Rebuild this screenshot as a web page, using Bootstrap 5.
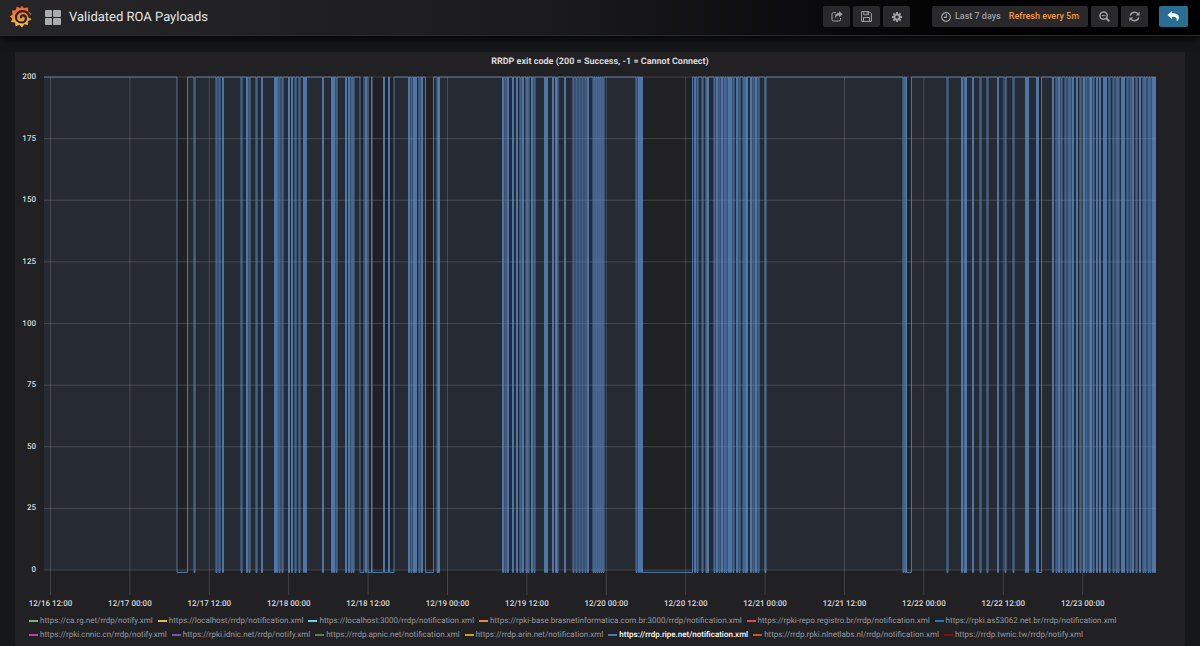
<!DOCTYPE html>
<html lang="en">
<head>
<meta charset="utf-8">
<meta name="viewport" content="width=device-width, initial-scale=1">
<title>Validated ROA Payloads</title>
<link href="https://cdn.jsdelivr.net/npm/bootstrap@5.3.0/dist/css/bootstrap.min.css" rel="stylesheet">
<style>
body { background: #161719; color: #d8d9da; font-family: Roboto, "Liberation Sans", sans-serif; font-size: 8px; line-height: 14px; text-rendering: geometricPrecision; }
.topbar { height: 36px; background: linear-gradient(90deg, #262628 0%, #1b1b1d 45%, #020203 80%, #000 100%); border-bottom: 1px solid #2a2a2d; box-shadow: 0 2px 12px #000; padding: 0 12px 2px 9px; }
.home { margin-right: 12px; }
.dash-title { font-size: 13px; line-height: 20px; color: #e3e4e6; gap: 8px; padding-top: 2px; }
.tool { --bs-btn-color: #9fa0a3; --bs-btn-bg: #29292b; --bs-btn-hover-bg: #36363a; --bs-btn-hover-color: #fff; --bs-btn-border-radius: 2px; --bs-btn-border-width: 0; --bs-btn-padding-x: 0; --bs-btn-padding-y: 0; width: 27px; height: 21px; background-color: var(--bs-btn-bg); }
.tool-time { width: 156px; font-size: 9px; line-height: 23px; font-weight: 500; white-space: nowrap; }
.tool-back { --bs-btn-color: #fff; --bs-btn-bg: #2a6e93; --bs-btn-hover-bg: #34809f; width: 29px; }
.tool-groups { gap: 22px; }
.tools { gap: 3px; }
.tool-back { margin-left: 11px; }
.accent { color: #f0993e; }
.board { padding: 16px 15px 0; }
.graph-panel { background: #212124; }
.panel-title { font-size: 9px; line-height: 18px; font-weight: 700; color: #d8d9db; padding-top: 1px; }
.chart { padding: 6px 29px 0 0; min-height: 200px; }
.y-axis { width: 29px; padding: 0 8px 25px 0; font-weight: 500; }
.y-axis span { height: 0; line-height: 0; }
.plot { flex: 1 1 0; min-height: 0; overflow: visible; }
.x-axis { height: 40px; overflow: visible; margin-bottom: -15px; }
.grid-line { stroke: #c8c8c8; stroke-opacity: .2; stroke-width: 1; vector-effect: non-scaling-stroke; }
.area { fill: #5a82b4; fill-opacity: .1; }
.series { fill: none; stroke: #5b8fce; stroke-opacity: .76; stroke-width: 1; vector-effect: non-scaling-stroke; }
.tick-text { fill: #d8d9da; font-size: 8px; font-weight: 500; text-anchor: middle; }
.legend-list { padding: 19px 14px 4px; column-gap: 5px; margin: 0; }
.legend-list a { color: #97989b; text-decoration: none; gap: 2px; white-space: nowrap; }
.legend-list a.selected { color: #fff; font-weight: 500; }
.swatch { width: 9px; height: 2px; }
</style>
</head>
<body class="min-vh-100 d-flex flex-column">
<header class="topbar d-flex align-items-center">
  <a href="#" aria-label="Home" class="home d-flex">
    <svg width="24" height="24" viewBox="0 0 24 24">
      <defs><linearGradient id="flame" x1="0" y1="0" x2="0" y2="1"><stop offset="0" stop-color="#ee5a34"/><stop offset=".5" stop-color="#f08a35"/><stop offset="1" stop-color="#fbd034"/></linearGradient></defs>
      <path fill="url(#flame)" d="M12.800 .8 14.800 3l4.200-.6.200 4 3 2.400-1.800 2.600 2 3.400-3.400 1.200-.2 4-3.600-.8-2.200 3.200-2.600-2.600-3.800 1.400-.6-3.600-4-.6 1.400-3.200-2.600-2.600 2.800-1.800-.6-4 3.600-.2 1.200-3.600 3.200 1.400z"/>
      <path fill="none" stroke="#242426" stroke-width="2.200" stroke-linecap="round" d="M20.500 12C19.800 8.400 17 6.200 13.500 6.200c-4 0-6.500 2.900-6.500 6 0 3.100 2.500 5.300 5.400 5.300 2.700 0 4.500-1.800 4.500-4 0-1.900-1.400-3.100-3-3.100-1.300 0-2 .9-1.900 1.900"/>
    </svg>
  </a>
  <a href="#" class="dash-title d-flex align-items-center text-decoration-none me-auto text-nowrap">
    <svg width="16" height="15" viewBox="0 0 16 15" fill="#abacae" aria-hidden="true"><rect x="0" y="0" width="7" height="7" rx="1"/><rect x="8" y="0" width="8" height="7" rx="1"/><rect x="0" y="8" width="7" height="7" rx="1"/><rect x="8" y="8" width="8" height="7" rx="1"/></svg>
    <span>Validated ROA Payloads</span>
  </a>
  <div class="tool-groups d-flex">
    <div class="tools d-flex">
      <button type="button" class="btn tool d-flex align-items-center justify-content-center" aria-label="Share">
        <svg width="12" height="11" viewBox="0 0 12 11"><path d="M5 1.600H2.500Q1 1.600 1 3v5.500Q1 10 2.500 10h5.500q1.500 0 1.500-1.500V7" fill="none" stroke="currentColor"/><path d="M8 0l3.700 3.200L8 6.300V4.500C5.800 4.400 5 5.200 5 7.400 3.100 4.600 4.400 1.900 8 1.900z" fill="currentColor"/></svg>
      </button>
      <button type="button" class="btn tool d-flex align-items-center justify-content-center" aria-label="Save">
        <svg width="11" height="11" viewBox="0 0 11 11" fill="none" stroke="currentColor"><path d="M.6.6h7.600l2.200 2.200v7.600H.6zM2.800.6v3.200h4.700V.6M2.500 10.400V6.500h6v3.900M6 1v2"/></svg>
      </button>
      <button type="button" class="btn tool d-flex align-items-center justify-content-center" aria-label="Settings">
        <svg width="10" height="10" viewBox="0 0 10 10" fill="none" stroke="currentColor"><circle cx="5" cy="5" r="2.600" stroke-width="2"/><path stroke-width="2" d="M5 0v2M5 8v2M0 5h2M8 5h2M1.400 1.400l1.300 1.300M7.300 7.300l1.300 1.300M1.400 8.600l1.300-1.300M7.300 2.700l1.300-1.300"/></svg>
      </button>
    </div>
    <div class="tools d-flex">
      <button type="button" class="btn tool tool-time d-flex align-items-center justify-content-center">
        <svg width="10" height="10" viewBox="0 0 10 10" fill="none" stroke="currentColor" stroke-width="1.200"><circle cx="5" cy="5" r="4.300"/><path d="M5.300 2.300v3H3"/></svg>
        <span class="ms-1 me-2">Last 7 days</span><span class="accent">Refresh every 5m</span>
      </button>
      <button type="button" class="btn tool d-flex align-items-center justify-content-center" aria-label="Zoom out">
        <svg width="11" height="11" viewBox="0 0 11 11" fill="none" stroke="currentColor"><circle cx="4.600" cy="4.600" r="3.700" stroke-width="1.500"/><path d="M2.700 4.600h3.800"/><path stroke-width="2" stroke-linecap="round" d="M7.500 7.500l2.300 2.300"/></svg>
      </button>
      <button type="button" class="btn tool d-flex align-items-center justify-content-center" aria-label="Refresh">
        <svg width="11" height="11" viewBox="0 0 11 11"><path d="M1.200 4.500C1.800 2.500 3.500 1.200 5.500 1.200q2 0 3.500 1.500M9.800 6.500C9.200 8.500 7.500 9.800 5.500 9.800q-2 0-3.500-1.500" fill="none" stroke="currentColor" stroke-width="1.500"/><path d="M10.600.7v3.900H6.700zM.4 10.300V6.400h3.900z" fill="currentColor"/></svg>
      </button>
    </div>
  </div>
  <button type="button" class="btn tool tool-back d-flex align-items-center justify-content-center" aria-label="Back">
    <svg width="13" height="11" viewBox="0 0 13 11"><path fill="currentColor" d="M5 0 .5 4 5 8V5.700c3.700-.2 5.300.8 4.700 4.800C13.500 7 13 2.300 5 2.300z"/></svg>
  </button>
</header>

<main class="board d-flex flex-column flex-grow-1">
  <section class="graph-panel d-flex flex-column flex-grow-1">
    <h1 class="panel-title text-center m-0">RRDP exit code (200 = Success, -1 = Cannot Connect)</h1>
    <div class="chart d-flex flex-grow-1">
      <div class="y-axis d-flex flex-column justify-content-between text-end">
        <span>200</span><span>175</span><span>150</span><span>125</span><span>100</span><span>75</span><span>50</span><span>25</span><span>0</span>
      </div>
      <div class="d-flex flex-column flex-grow-1">
        <svg class="plot w-100" id="plot" viewBox="0 0 1112 200" preserveAspectRatio="none" role="img" aria-label="RRDP exit code over time"></svg>
        <svg class="x-axis w-100" id="xAxis"></svg>
      </div>
    </div>
    <ul class="legend-list list-unstyled d-flex flex-wrap" id="legend"></ul>
  </section>
</main>

<script src="https://cdn.jsdelivr.net/npm/bootstrap@5.3.0/dist/js/bootstrap.bundle.min.js"></script>
<script>
// Outages as [start, end]; a bare number is a single failed sample.
const outages = [[133,143.5],150.5,172.500,175.500,179,197.500,203,205.500,212.500,218,231,233,235.500,238.500,
  245,248,251.500,255.500,260,262,279,288,290,292.500,302,305,307.500,309.500,
  [316,320],322,[324,327.500],[328,339.500],[340.500,344.500],[345.500,350],
  365,367.500,370,372,375.500,378,[381.500,389.500],393.500,395,
  459,461.500,464,469,473,476.500,479,482.500,484.500,488,490.500,501,503,509,512,513.500,521,529.500,532.500,535.500,
  538.500,541.500,544,549.500,551.500,553.500,555.500,557.500,559.500,592.500,595,597,[598.500,648.500],
  651,653.500,658.500,662.500,664,670.500,673,675.500,678,680.500,682.500,685,687,689.500,693,695.500,699.500,701.500,703,707,709.500,712,714.500,721.500,
  859.500,861.500,[862.500,867.500],903.500,918,920.500,922,929,936.500,943.500,954,961.500,969.500,982,984,993,[994.500,997.500],
  1009,1012.500,1015,1017.500,1021.500,1024.500,1026.500,1029,1033,1036.500,1040,1042.500,1045.500,1047,1049.500,1053,1056,1060,1062,1065.500,1069.500,1072.500,1074.500,1078,1080,1083.500,1086.500,1089,1092.500,1096,1099.500,1101.500,1104.500,1106.500,1109,1111];
const labels = ['12/16 12:00','12/17 00:00','12/17 12:00','12/18 00:00','12/18 12:00','12/19 00:00','12/19 12:00','12/20 00:00','12/20 12:00','12/21 00:00','12/21 12:00','12/22 00:00','12/22 12:00','12/23 00:00'];
const series = [['ca.rg.net/rrdp/notify.xml','#7eb26d'],['localhost/rrdp/notification.xml','#eab839'],['localhost:3000/rrdp/notification.xml','#6ed0e0'],['rpki-base.brasnetinformatica.com.br:3000/rrdp/notification.xml','#ef843c'],['rpki-repo.registro.br/rrdp/notification.xml','#e24d42'],['rpki.as53062.net.br/rrdp/notification.xml','#1f78c1'],['rpki.cnnic.cn/rrdp/notify.xml','#ba43a9'],['rpki.idnic.net/rrdp/notify.xml','#705da0'],['rrdp.apnic.net/notification.xml','#508642'],['rrdp.arin.net/notification.xml','#cca300'],['rrdp.ripe.net/notification.xml','#447ebc'],['rrdp.rpki.nlnetlabs.nl/rrdp/notification.xml','#c15c17'],['rrdp.twnic.tw/rrdp/notify.xml','#890f02']];

const width = 1112, tickX = i => 6.5 + i * 79.4;
let d = 'M0 0';
for (const o of outages) {
  const [from, to] = Array.isArray(o) ? o : [o - .5, o + .5];
  d += `H${from}V201H${to}V0`;
}
d += `H${width}`;
let grid = '';
for (let v = 0; v <= 200; v += 25) grid += `<line class="grid-line" x1="0" x2="${width}" y1="${v}" y2="${v}"/>`;
labels.forEach((_, i) => grid += `<line class="grid-line" x1="${tickX(i)}" x2="${tickX(i)}" y1="0" y2="200"/>`);
document.getElementById('plot').innerHTML = `<path class="area" d="${d}V200H0Z"/>${grid}<path class="series" d="${d}"/>`;
document.getElementById('xAxis').innerHTML = labels.map((t, i) => {
  const p = (tickX(i) / width * 100).toFixed(3) + '%';
  return `<line class="grid-line" x1="${p}" x2="${p}" y1="0" y2="25"/><text class="tick-text" x="${p}" y="36">${t}</text>`;
}).join('');
document.getElementById('legend').innerHTML = series.map(([n, c]) =>
  `<li><a href="#" class="d-flex align-items-center${n.includes('ripe') ? ' selected' : ''}"><span class="swatch" style="background:${c}"></span>https://${n}</a></li>`).join('');
</script>
</body>
</html>
